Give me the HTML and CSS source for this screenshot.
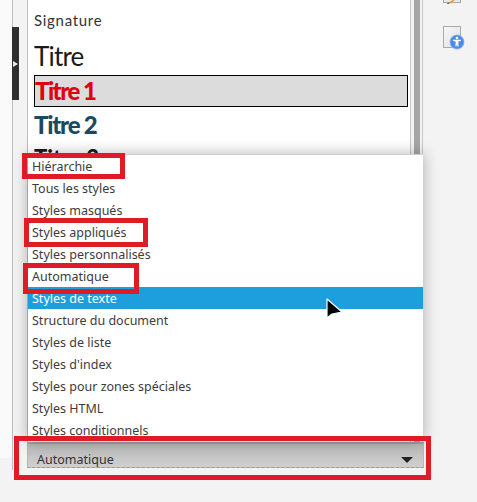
FILE: index.html
```html
<!DOCTYPE html>
<html lang="fr">
<head>
  <meta charset="UTF-8">
  <meta name="viewport" content="width=device-width, initial-scale=1.0">
  <title>Styles</title>
  <link rel="stylesheet" href="styles.css">
</head>
<body>
  <div class="app">
    <div class="gutter"></div>

    <div class="sidebar">
      <div class="deck">
        <div class="panel">
          <div class="style style-signature">Signature</div>
          <div class="style style-titre">Titre</div>
          <div class="style style-titre1">Titre 1</div>
          <div class="style style-titre2">Titre 2</div>
          <div class="style style-titre3">Titre 3</div>
        </div>
        <div class="scroll"><div class="scroll-thumb"></div></div>
      </div>
      <div class="select">
        <span>Automatique</span>
        <span class="select-arrow"></span>
      </div>
    </div>

    <div class="rail">
      <svg class="rail-pencil" width="20" height="4" viewBox="0 0 20 4">
        <rect x="0.5" y="-6" width="17" height="8.5" fill="#e8e8e8" stroke="#a8a8a8"/>
        <path d="M5 3 L10 0 L12 0 L7 3.5 Z" fill="#e8920c"/>
        <path d="M4 4 L5 2.5 L6.5 3.5 Z" fill="#333"/>
      </svg>
      <svg class="rail-doc" width="22" height="24" viewBox="0 0 22 24">
        <defs>
          <linearGradient id="docFill" x1="0" y1="0" x2="1" y2="1">
            <stop offset="0" stop-color="#f8f8f8"/>
            <stop offset="1" stop-color="#dedede"/>
          </linearGradient>
        </defs>
        <rect x="0.5" y="0.5" width="17" height="21" fill="url(#docFill)" stroke="#ababab"/>
        <circle cx="14" cy="16" r="7" fill="#4a8be8" stroke="#7fb0f2" stroke-width="0.8"/>
        <circle cx="14" cy="12" r="1.3" fill="#fff"/>
        <path d="M10 13.8 L18 13.8 L18 15 L15.3 15.4 L15.6 20.5 L14.5 20.5 L14 17.5 L13.5 20.5 L12.4 20.5 L12.7 15.4 L10 15 Z" fill="#fff"/>
      </svg>
    </div>

    <div class="handle"><span class="handle-arrow"></span></div>

    <ul class="menu">
      <li>Hiérarchie</li>
      <li>Tous les styles</li>
      <li>Styles masqués</li>
      <li>Styles appliqués</li>
      <li>Styles personnalisés</li>
      <li>Automatique</li>
      <li class="active">Styles de texte</li>
      <li>Structure du document</li>
      <li>Styles de liste</li>
      <li>Styles d'index</li>
      <li>Styles pour zones spéciales</li>
      <li>Styles HTML</li>
      <li>Styles conditionnels</li>
    </ul>

    <div class="mark mark-hierarchie"></div>
    <div class="mark mark-appliques"></div>
    <div class="mark mark-auto"></div>
    <div class="mark mark-select"></div>

    <svg class="cursor" width="20" height="26" viewBox="0 0 20 26">
      <path d="M2 2 L2 21 L7 17 L17 15 Z" fill="#000" stroke="#fff" stroke-width="1.2" stroke-linejoin="round"/>
    </svg>
  </div>
</body>
</html>
```

FILE: styles.css
```css
html, body {
  margin: 0;
  height: 100%;
  background-color: #f3f3f3;
}
body {
  overflow: hidden;
}
.app {
  position: relative;
  display: flex;
  align-items: flex-start;
  width: 477px;
  height: 502px;
  overflow: hidden;
}
.gutter {
  width: 12px;
  height: 458px;
  flex-shrink: 0;
  background-color: #fafafa;
}
.sidebar {
  width: 397px;
  height: 470px;
  flex-shrink: 0;
  padding-left: 14px;
  border-left: 1px solid #bdbdbd;
  background-color: #f3f3f3;
}
.deck {
  display: flex;
  height: 442px;
}
.panel {
  width: 376px;
  padding: 0 0 0 6px;
  flex-shrink: 0;
  border-left: 1px solid #bdbdbd;
  border-right: 1px solid #c8c8c8;
  background-color: #fff;
  overflow: hidden;
}
.scroll {
  width: 11px;
  border-right: 1px solid #c8c8c8;
  background-color: #f3f3f3;
  display: flex;
  justify-content: center;
}
.scroll-thumb {
  width: 6px;
  background-color: #a6a6a6;
}
.style {
  color: #1a1a1a;
  font-family: "Lato", sans-serif;
  white-space: nowrap;
}
.style-signature {
  height: 41px;
  line-height: 41px;
  color: #333;
  font-size: 15px;
  letter-spacing: 0.7px;
}
.style-titre {
  height: 34px;
  line-height: 30px;
  font-size: 26px;
  letter-spacing: -0.8px;
}
.style-titre1 {
  width: 372px;
  height: 30px;
  line-height: 29px;
  border: 1px solid #000;
  background-color: #dcdcdc;
  color: #e2000f;
  font-size: 24px;
  font-weight: 900;
  letter-spacing: -1.5px;
}
.style-titre2 {
  height: 36px;
  line-height: 35px;
  color: #1b4a5e;
  font-size: 24px;
  font-weight: 900;
  letter-spacing: -1.2px;
}
.style-titre3 {
  height: 30px;
  line-height: 30px;
  color: #1a1a1a;
  font-size: 22px;
  font-weight: 900;
}
.select {
  display: flex;
  align-items: center;
  justify-content: space-between;
  width: 397px;
  height: 26px;
  padding: 8px 10px 0 9px;
  box-sizing: border-box;
  border-top: 2px solid #a0a0a0;
  border-left: 1px solid #b8b8b8;
  border-right: 1px solid #b8b8b8;
  border-bottom: 1px dashed #9a9a9a;
  background: linear-gradient(#b9b9b9, #d0d0d0);
  color: #333;
  font-family: "Noto Sans", sans-serif;
  font-size: 12.5px;
}
.select-arrow {
  width: 0;
  height: 0;
  border-left: 6px solid transparent;
  border-right: 6px solid transparent;
  border-top: 6px solid #222;
}
.rail {
  flex: 1;
  display: flex;
  flex-direction: column;
  gap: 22px;
  padding-left: 19px;
}
.rail svg {
  display: block;
}
.handle {
  position: absolute;
  left: 12px;
  top: 27px;
  width: 7px;
  height: 73px;
  display: flex;
  align-items: center;
  justify-content: center;
  background-color: #2e2e2e;
}
.handle-arrow {
  width: 0;
  height: 0;
  border-top: 3.5px solid transparent;
  border-bottom: 3.5px solid transparent;
  border-left: 5px solid #e8e8e8;
}
.menu {
  position: absolute;
  left: 28px;
  top: 154px;
  width: 395px;
  height: 287px;
  margin: 0;
  padding: 1px 0 0;
  list-style: none;
  overflow: hidden;
  border-top: 1px solid #cfcfcf;
  box-sizing: border-box;
  background-color: #fff;
  box-shadow: 0 0 14px rgba(0, 0, 0, 0.3);
  color: #3c3c3c;
  font-family: "Noto Sans", sans-serif;
  font-size: 12.5px;
}
.menu li {
  height: 22px;
  line-height: 24px;
  padding-left: 4px;
}
.menu li:first-child {
  height: 21px;
  line-height: 22px;
}
.menu li.active {
  background-color: #1d9edd;
  color: #fff;
}
.mark {
  position: absolute;
  box-sizing: border-box;
  border: 5px solid #e01b28;
}
.mark-hierarchie {
  left: 22px;
  top: 153px;
  width: 103px;
  height: 26px;
}
.mark-appliques {
  left: 24px;
  top: 218px;
  width: 124px;
  height: 29px;
}
.mark-auto {
  left: 23px;
  top: 263px;
  width: 116px;
  height: 31px;
}
.mark-select {
  left: 14px;
  top: 436px;
  width: 417px;
  height: 44px;
}
.cursor {
  position: absolute;
  left: 325px;
  top: 297px;
}
```
